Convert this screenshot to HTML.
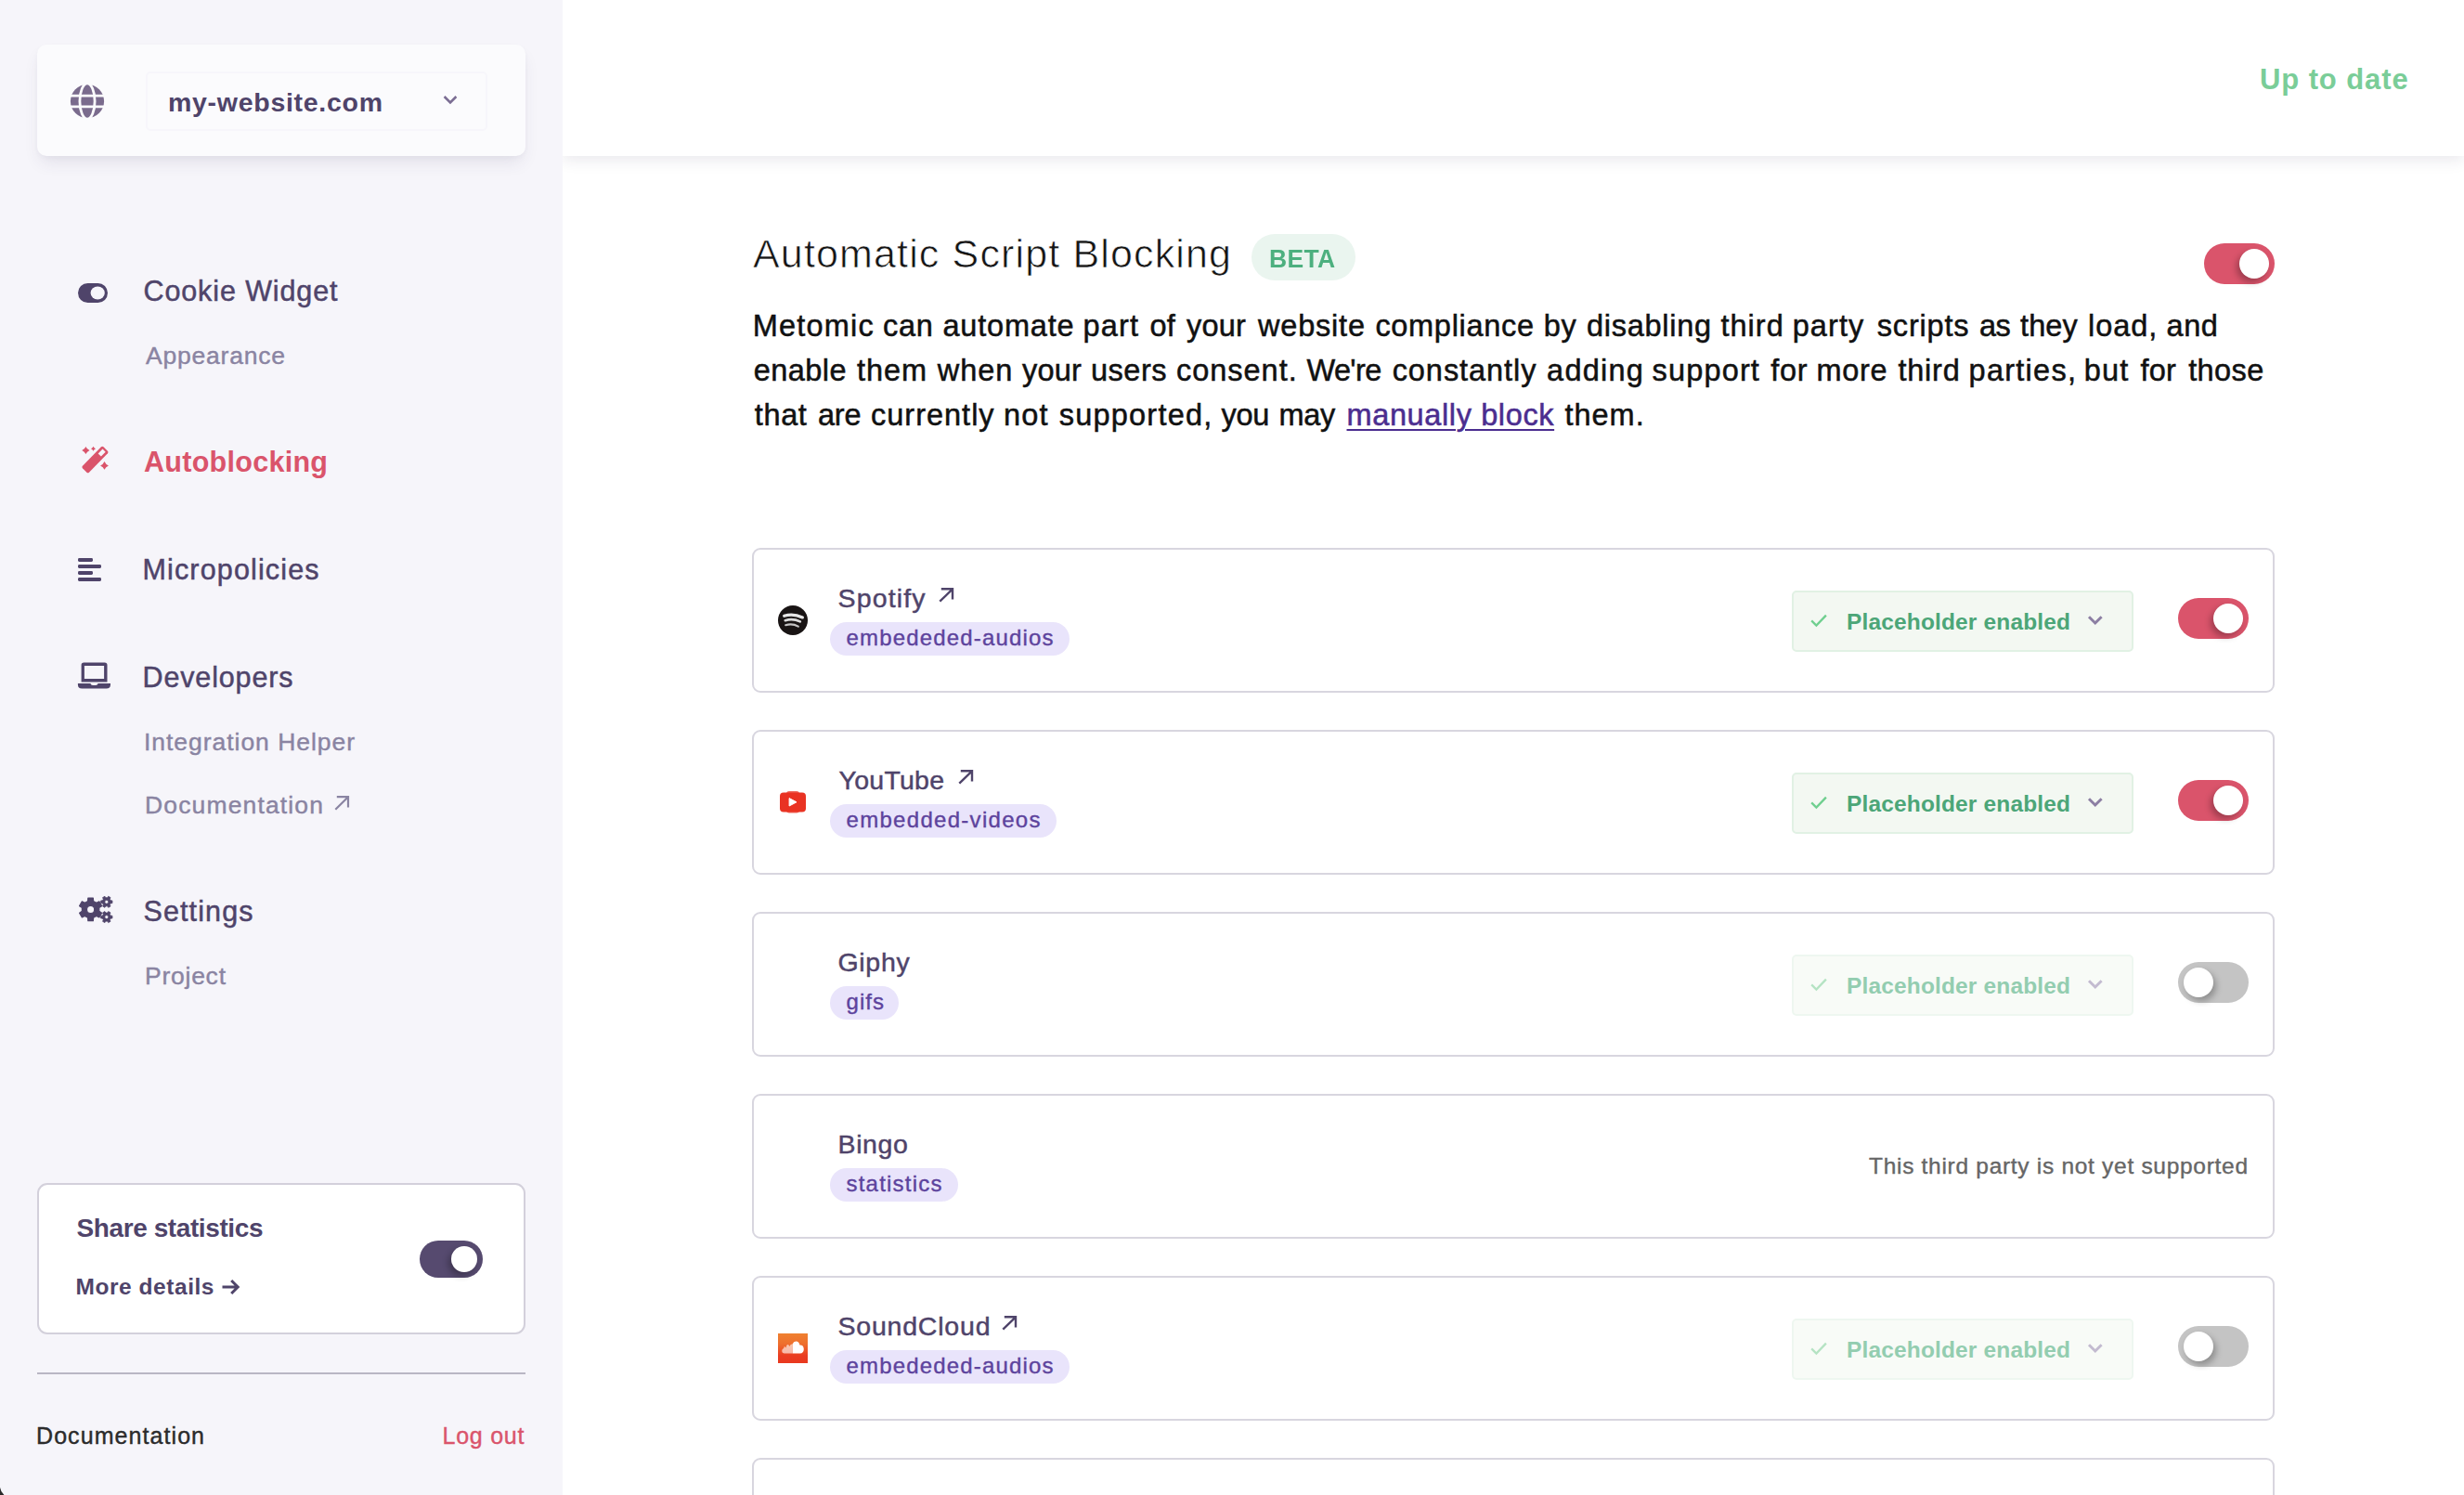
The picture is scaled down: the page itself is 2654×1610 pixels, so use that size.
<!DOCTYPE html>
<html lang="en"><head><meta charset="utf-8"><title>Automatic Script Blocking</title>
<style>
html,body{margin:0;padding:0;width:2654px;height:1610px;overflow:hidden;background:#fff}
#app{position:absolute;left:0;top:0;width:2654px;height:1610px;overflow:hidden;background:#fff;font-family:"Liberation Sans",sans-serif}
.t{position:absolute;white-space:nowrap;line-height:1em;display:block;text-decoration:none}
.ab{position:absolute;display:block;overflow:visible}
#sidebar{position:absolute;left:0;top:0;width:606px;height:1610px;background:#f6f5fa}
#header{position:absolute;left:606px;top:0;width:2048px;height:168px;background:#fff;box-shadow:0 5px 15px rgba(40,30,70,.095)}
#sitecard{position:absolute;left:40px;top:48px;width:526px;height:120px;border-radius:10px;background:#fbfbfd;box-shadow:0 10px 18px -4px rgba(60,50,100,.115),0 2px 5px rgba(60,50,100,.03)}
#sel{position:absolute;left:156.5px;top:76.5px;width:368px;height:64px;box-sizing:border-box;border:2px solid #f7f6fb;border-radius:5px;background:#fbfbfd}
#sharecard{position:absolute;left:40px;top:1274px;width:526px;height:163px;box-sizing:border-box;border:2px solid #d3d0db;border-radius:11px;background:#fff}
#divider{position:absolute;left:40px;top:1477.5px;width:526px;height:2px;background:#b9b6c4}
#corner{position:absolute;left:0;top:1601px;width:6px;height:9px}
.card{position:absolute;left:810px;width:1640px;box-sizing:border-box;border:2px solid #d8d6df;border-radius:9px;background:#fff}
.pill{position:absolute;height:36px;border-radius:18px;background:#e9e4fb}
.ph{position:absolute;left:1930px;width:368px;height:66px;box-sizing:border-box;border:2px solid #e1f1e4;border-radius:5px;background:#f3f8f2}
.tg{position:absolute}
.tg i{position:absolute;display:block;border-radius:50%;background:#fff}
#betapill{position:absolute;left:1348px;top:252px;width:112px;height:50px;border-radius:25px;background:#eaf5ef}
</style></head>
<body>
<div id="app">
<div id="header"></div>
<div id="sidebar"></div>
<div id="sitecard"></div><div id="sel"></div>
<svg class="ab" style="left:74.2px;top:88.6px;" width="40" height="40" viewBox="0 0 40 40"><circle cx="20" cy="20" r="18.1" fill="#7a6b8d"/><g fill="none" stroke="#fbfbfd" stroke-width="2.8"><path d="M0,14.2 H40 M0,25.9 H40"/><ellipse cx="20" cy="20" rx="8.1" ry="19.2"/></g></svg>
<svg class="ab" style="left:476px;top:101px" width="18" height="13" viewBox="0 0 18 13" fill="none" stroke="#7b6d93" stroke-width="2.6"><path d="M2.6,3 L9,9.4 L15.4,3"/></svg>
<svg class="ab" style="left:84px;top:305px;" width="32" height="21" viewBox="0 0 32 21"><rect x="0" y="0" width="32" height="21" rx="10.5" fill="#4f446a"/><ellipse cx="21.2" cy="10.5" rx="7.6" ry="7" fill="#f6f5fa"/></svg>
<svg class="ab" style="left:84px;top:476px;" width="40" height="40" viewBox="0 0 40 40"><g transform="translate(18.45,19.00) rotate(-45.63)"><rect x="-16.09" y="-4.9" width="32.18" height="9.8" rx="1.8" fill="#da546b"/><rect x="6.89" y="-2.2" width="6.9" height="4.4" fill="#f6f5fa"/></g><path fill="#da546b" d="M8.40,4.90Q9.63,7.77 12.50,9.00Q9.63,10.23 8.40,13.10Q7.17,10.23 4.30,9.00Q7.17,7.77 8.40,4.90ZM16.50,4.70Q17.25,6.45 19.00,7.20Q17.25,7.95 16.50,9.70Q15.75,7.95 14.00,7.20Q15.75,6.45 16.50,4.70ZM28.50,21.00Q29.82,24.08 32.90,25.40Q29.82,26.72 28.50,29.80Q27.18,26.72 24.10,25.40Q27.18,24.08 28.50,21.00Z"/></svg>
<svg class="ab" style="left:84px;top:601px;" width="26" height="26" viewBox="0 0 26 26"><rect x="0" y="0" width="16" height="4" rx="1.4" fill="#4f446a"/><rect x="0" y="7" width="25" height="4" rx="1.4" fill="#4f446a"/><rect x="0" y="14" width="16" height="4" rx="1.4" fill="#4f446a"/><rect x="0" y="21" width="25" height="4" rx="1.4" fill="#4f446a"/></svg>
<svg class="ab" style="left:83px;top:712px;" width="38" height="32" viewBox="0 0 38 32"><path fill="#4f446a" fill-rule="evenodd" d="M4.6,4.2 Q4.6,1.4 7.4,1.4 H29.7 Q32.5,1.4 32.5,4.2 V22.4 H4.6 Z M7.9,4.9 V19.1 H29.1 V4.9 Z"/><path fill="#4f446a" d="M0.9,24 H14.4 Q14.9,26 17,26 H20 Q22.1,26 22.6,24 H36 V25.2 Q36,29.5 31.6,29.5 H5.3 Q0.9,29.5 0.9,25.2 Z"/></svg>
<svg class="ab" style="left:84px;top:963px;" width="40" height="34" viewBox="0 0 40 34"><path fill="#4f446a" fill-rule="evenodd" stroke="#4f446a" stroke-width="1.2" stroke-linejoin="round" d="M10.60,7.49 L10.85,4.10 L16.35,4.10 L16.60,7.49 L19.82,9.35 L22.87,7.87 L25.62,12.63 L22.81,14.54 L22.81,18.26 L25.62,20.17 L22.87,24.93 L19.82,23.45 L16.60,25.31 L16.35,28.70 L10.85,28.70 L10.60,25.31 L7.38,23.45 L4.33,24.93 L1.58,20.17 L4.39,18.26 L4.39,14.54 L1.58,12.63 L4.33,7.87 L7.38,9.35Z M9.50,16.40 a4.1,4.1 0 1,0 8.2,0 a4.1,4.1 0 1,0 -8.2,0Z"/><path fill="#4f446a" fill-rule="evenodd" stroke="#4f446a" stroke-width="0.8" stroke-linejoin="round" d="M35.16,6.83 L36.95,6.93 L36.95,9.67 L35.16,9.77 L34.25,11.34 L35.06,12.94 L32.68,14.31 L31.71,12.81 L29.89,12.81 L28.92,14.31 L26.54,12.94 L27.35,11.34 L26.44,9.77 L24.65,9.67 L24.65,6.93 L26.44,6.83 L27.35,5.26 L26.54,3.66 L28.92,2.29 L29.89,3.79 L31.71,3.79 L32.68,2.29 L35.06,3.66 L34.25,5.26Z M28.80,8.30 a2.0,2.0 0 1,0 4.0,0 a2.0,2.0 0 1,0 -4.0,0Z M35.16,23.13 L36.95,23.23 L36.95,25.97 L35.16,26.07 L34.25,27.64 L35.06,29.24 L32.68,30.61 L31.71,29.11 L29.89,29.11 L28.92,30.61 L26.54,29.24 L27.35,27.64 L26.44,26.07 L24.65,25.97 L24.65,23.23 L26.44,23.13 L27.35,21.56 L26.54,19.96 L28.92,18.59 L29.89,20.09 L31.71,20.09 L32.68,18.59 L35.06,19.96 L34.25,21.56Z M28.80,24.60 a2.0,2.0 0 1,0 4.0,0 a2.0,2.0 0 1,0 -4.0,0Z"/></svg>
<svg class="ab" style="left:360px;top:856px" width="17" height="17" viewBox="-1 -1 17 17" fill="none" stroke="#8a84a2" stroke-width="2.2"><path d="M0.3,14.7 L14,1.3 M1.8,1.2 H14 V12.4"/></svg>
<div id="sharecard"></div>
<div class="tg" style="left:452px;top:1336px;width:68px;height:40px;border-radius:20.0px;background:#564a6f"><i style="left:34.0px;top:6.0px;width:28px;height:28px;box-shadow:-3px 4px 7px rgba(0,0,0,.28)"></i></div>
<svg class="ab" style="left:238px;top:1376px" width="22" height="20" viewBox="0 0 22 20" fill="none" stroke="#4f446a" stroke-width="3"><path d="M1.5,10 H18 M11.2,3 L18.2,10 L11.2,17"/></svg>
<div id="divider"></div>
<svg id="corner" viewBox="0 0 6 9"><path d="M0,0.8 Q0.6,5.4 4.4,9 L0,9Z" fill="#2a2a2a"/></svg>
<div id="betapill"></div>
<div class="tg" style="left:2374px;top:262px;width:76px;height:44px;border-radius:22.0px;background:#da546b"><i style="left:38.0px;top:6.0px;width:32px;height:32px;box-shadow:-3px 4px 7px rgba(0,0,0,.28)"></i></div>
<div class="card" style="top:590px;height:156px"></div>
<div class="pill" style="left:894px;top:670px;width:257.5px"></div>
<svg class="ab" style="left:1011px;top:632.2px" width="17" height="17" viewBox="-1 -1 17 17" fill="none" stroke="#4f446a" stroke-width="2.4"><path d="M0.3,14.7 L14,1.3 M1.8,1.2 H14 V12.4"/></svg>
<svg class="ab" style="left:838px;top:652px;" width="32" height="32" viewBox="0 0 32 32"><circle cx="16" cy="16" r="16" fill="#191414"/><g fill="none" stroke="#fff" stroke-linecap="round" style="filter:blur(.6px)"><path d="M6.6,11.3 Q16.5,8.2 26.4,13" stroke-width="3.1" opacity=".9"/><path d="M7.8,16.2 Q16,13.7 23.8,17.4" stroke-width="2.7" opacity=".85"/><path d="M8.2,21.2 Q15.5,19 21.8,22.6" stroke-width="2.2" opacity=".75"/></g></svg>
<div class="ph" style="top:636px;"></div>
<svg class="ab" style="left:1949px;top:660px" width="20" height="16" viewBox="0 0 20 16" fill="none" stroke="#6fcf8f" stroke-width="2.3"><path d="M2.2,8.4 L7.4,13.5 L17.9,2.6"/></svg>
<svg class="ab" style="left:2248px;top:662px" width="18" height="12" viewBox="0 0 18 12" fill="none" stroke="#8c7fa3" stroke-width="3"><path d="M2,2.3 L8.8,9 L15.6,2.3"/></svg>
<div class="tg" style="left:2346px;top:644px;width:76px;height:44px;border-radius:22.0px;background:#da546b"><i style="left:38.0px;top:6.0px;width:32px;height:32px;box-shadow:-3px 4px 7px rgba(0,0,0,.28)"></i></div>
<div class="card" style="top:786px;height:156px"></div>
<div class="pill" style="left:894px;top:866px;width:244.0px"></div>
<svg class="ab" style="left:1031.5px;top:828.2px" width="17" height="17" viewBox="-1 -1 17 17" fill="none" stroke="#4f446a" stroke-width="2.4"><path d="M0.3,14.7 L14,1.3 M1.8,1.2 H14 V12.4"/></svg>
<svg class="ab" style="left:840px;top:852.3px;" width="28" height="24" viewBox="0 0 28 24"><g style="filter:blur(.55px)"><rect x="0" y="1.4" width="28" height="21" rx="4" fill="#e93323"/><rect x="7" y="0" width="14" height="23.6" rx="3" fill="#e93323" opacity=".75"/><path d="M10.1,7.6 L18,11.8 L10.1,16 Z" fill="#fff" stroke="#fff" stroke-width="1" stroke-linejoin="round"/></g></svg>
<div class="ph" style="top:832px;"></div>
<svg class="ab" style="left:1949px;top:856px" width="20" height="16" viewBox="0 0 20 16" fill="none" stroke="#6fcf8f" stroke-width="2.3"><path d="M2.2,8.4 L7.4,13.5 L17.9,2.6"/></svg>
<svg class="ab" style="left:2248px;top:858px" width="18" height="12" viewBox="0 0 18 12" fill="none" stroke="#8c7fa3" stroke-width="3"><path d="M2,2.3 L8.8,9 L15.6,2.3"/></svg>
<div class="tg" style="left:2346px;top:840px;width:76px;height:44px;border-radius:22.0px;background:#da546b"><i style="left:38.0px;top:6.0px;width:32px;height:32px;box-shadow:-3px 4px 7px rgba(0,0,0,.28)"></i></div>
<div class="card" style="top:982px;height:156px"></div>
<div class="pill" style="left:894px;top:1062px;width:73.6px"></div>
<div class="ph" style="top:1028px;opacity:.55;"></div>
<svg class="ab" style="left:1949px;top:1052px" width="20" height="16" viewBox="0 0 20 16" fill="none" stroke="#b5e3c3" stroke-width="2.3"><path d="M2.2,8.4 L7.4,13.5 L17.9,2.6"/></svg>
<svg class="ab" style="left:2248px;top:1054px" width="18" height="12" viewBox="0 0 18 12" fill="none" stroke="#c3bbd0" stroke-width="3"><path d="M2,2.3 L8.8,9 L15.6,2.3"/></svg>
<div class="tg" style="left:2346px;top:1036px;width:76px;height:44px;border-radius:22.0px;background:#c4c4c4"><i style="left:6.0px;top:6.0px;width:32px;height:32px;box-shadow:3px 4px 7px rgba(0,0,0,.28)"></i></div>
<div class="card" style="top:1178px;height:156px"></div>
<div class="pill" style="left:894px;top:1258px;width:138.0px"></div>
<div class="card" style="top:1374px;height:156px"></div>
<div class="pill" style="left:894px;top:1454px;width:257.5px"></div>
<svg class="ab" style="left:1078.5px;top:1416.2px" width="17" height="17" viewBox="-1 -1 17 17" fill="none" stroke="#4f446a" stroke-width="2.4"><path d="M0.3,14.7 L14,1.3 M1.8,1.2 H14 V12.4"/></svg>
<svg class="ab" style="left:838px;top:1436px;" width="32" height="32" viewBox="0 0 32 32"><defs><linearGradient id="scg" x1="0" y1="0" x2="0" y2="1"><stop offset="0" stop-color="#ef8030"/><stop offset=".35" stop-color="#ee6f2d"/><stop offset=".75" stop-color="#ea3d22"/><stop offset="1" stop-color="#e9391f"/></linearGradient></defs><rect width="32" height="32" fill="url(#scg)"/><g style="filter:blur(.7px)"><path fill="#fff" d="M15.8,21.6 V11.2 Q16.6,8.6 19.4,8.6 Q22.6,8.8 23.4,12.6 Q27.6,12.4 27.8,17 Q27.6,21.4 23.8,21.6 Z"/><path fill="#fff" opacity=".62" d="M4.2,19 Q4.2,16.4 6.2,16 Q6.6,13.4 7.6,14.4 L8.6,15.4 Q9.2,12 10.6,12 Q11.8,12.2 12.2,14 Q13.4,11.4 15.8,11.2 V21.6 H6.6 Q4.2,21.4 4.2,19 Z"/></g></svg>
<div class="ph" style="top:1420px;opacity:.55;"></div>
<svg class="ab" style="left:1949px;top:1444px" width="20" height="16" viewBox="0 0 20 16" fill="none" stroke="#b5e3c3" stroke-width="2.3"><path d="M2.2,8.4 L7.4,13.5 L17.9,2.6"/></svg>
<svg class="ab" style="left:2248px;top:1446px" width="18" height="12" viewBox="0 0 18 12" fill="none" stroke="#c3bbd0" stroke-width="3"><path d="M2,2.3 L8.8,9 L15.6,2.3"/></svg>
<div class="tg" style="left:2346px;top:1428px;width:76px;height:44px;border-radius:22.0px;background:#c4c4c4"><i style="left:6.0px;top:6.0px;width:32px;height:32px;box-shadow:3px 4px 7px rgba(0,0,0,.28)"></i></div>
<div class="card" style="top:1570px;height:156px"></div>
<span class="t" id="site" style="left:181.00px;top:95.87px;font-size:28.5px;font-weight:700;color:#4f446a;letter-spacing:0.712px;">my-website.com</span>
<span class="t" id="nav1" style="left:154.50px;top:298.18px;font-size:30.5px;font-weight:400;color:#4f446a;letter-spacing:0.888px;-webkit-text-stroke:0.49px #4f446a;">Cookie Widget</span>
<span class="t" id="sub1" style="left:157.00px;top:369.57px;font-size:26.5px;font-weight:400;color:#8a84a2;letter-spacing:0.786px;-webkit-text-stroke:0.42px #8a84a2;">Appearance</span>
<span class="t" id="nav2" style="left:155.00px;top:482.18px;font-size:30.5px;font-weight:700;color:#da546b;letter-spacing:0.287px;">Autoblocking</span>
<span class="t" id="nav3" style="left:153.50px;top:598.18px;font-size:30.5px;font-weight:400;color:#4f446a;letter-spacing:1.144px;-webkit-text-stroke:0.49px #4f446a;">Micropolicies</span>
<span class="t" id="nav4" style="left:153.50px;top:714.18px;font-size:30.5px;font-weight:400;color:#4f446a;letter-spacing:0.857px;-webkit-text-stroke:0.49px #4f446a;">Developers</span>
<span class="t" id="sub2" style="left:155.00px;top:785.57px;font-size:26.5px;font-weight:400;color:#8a84a2;letter-spacing:0.962px;-webkit-text-stroke:0.42px #8a84a2;">Integration Helper</span>
<span class="t" id="sub3" style="left:156.00px;top:853.57px;font-size:26.5px;font-weight:400;color:#8a84a2;letter-spacing:1.146px;-webkit-text-stroke:0.42px #8a84a2;">Documentation</span>
<span class="t" id="nav5" style="left:154.50px;top:966.18px;font-size:30.5px;font-weight:400;color:#4f446a;letter-spacing:1.112px;-webkit-text-stroke:0.49px #4f446a;">Settings</span>
<span class="t" id="sub4" style="left:156.00px;top:1037.57px;font-size:26.5px;font-weight:400;color:#8a84a2;letter-spacing:0.752px;-webkit-text-stroke:0.42px #8a84a2;">Project</span>
<span class="t" id="share" style="left:82.50px;top:1309.10px;font-size:28px;font-weight:700;color:#4f446a;letter-spacing:-0.402px;">Share statistics</span>
<span class="t" id="more" style="left:81.50px;top:1374.26px;font-size:24.5px;font-weight:700;color:#4f446a;letter-spacing:0.548px;">More details</span>
<span class="t" id="fdoc" style="left:39.00px;top:1533.64px;font-size:25px;font-weight:400;color:#2b2b2b;letter-spacing:1.071px;-webkit-text-stroke:0.40px #2b2b2b;">Documentation</span>
<span class="t" id="logout" style="left:476.50px;top:1533.64px;font-size:25px;font-weight:400;color:#da546b;letter-spacing:0.762px;-webkit-text-stroke:0.40px #da546b;">Log out</span>
<span class="t" id="uptodate" style="left:2434.00px;top:70.16px;font-size:31px;font-weight:700;color:#7acd98;letter-spacing:0.898px;">Up to date</span>
<span class="t" id="title" style="left:811.00px;top:252.10px;font-size:43px;font-weight:400;color:#151515;letter-spacing:1.144px;-webkit-text-stroke:0.7px #fff;">Automatic Script Blocking</span>
<span class="t" id="beta" style="left:1367.40px;top:264.37px;font-size:28.5px;font-weight:700;color:#4db07f;letter-spacing:0.334px;transform:scaleX(.93);transform-origin:0 0;">BETA</span>
<p style="margin:0"><span class="t" id="w0_0" style="left:810.70px;top:335.29px;font-size:32.5px;font-weight:400;color:#111;letter-spacing:1.199px;-webkit-text-stroke:0.52px #111;">Metomic</span>
<span class="t" id="w0_1" style="left:951.10px;top:335.29px;font-size:32.5px;font-weight:400;color:#111;letter-spacing:0.700px;-webkit-text-stroke:0.52px #111;">can</span>
<span class="t" id="w0_2" style="left:1015.50px;top:335.29px;font-size:32.5px;font-weight:400;color:#111;letter-spacing:0.798px;-webkit-text-stroke:0.52px #111;">automate</span>
<span class="t" id="w0_3" style="left:1166.50px;top:335.29px;font-size:32.5px;font-weight:400;color:#111;letter-spacing:1.201px;-webkit-text-stroke:0.52px #111;">part</span>
<span class="t" id="w0_4" style="left:1238.40px;top:335.29px;font-size:32.5px;font-weight:400;color:#111;letter-spacing:0.200px;-webkit-text-stroke:0.52px #111;">of</span>
<span class="t" id="w0_5" style="left:1277.90px;top:335.29px;font-size:32.5px;font-weight:400;color:#111;letter-spacing:0.265px;-webkit-text-stroke:0.52px #111;">your</span>
<span class="t" id="w0_6" style="left:1355.00px;top:335.29px;font-size:32.5px;font-weight:400;color:#111;letter-spacing:0.797px;-webkit-text-stroke:0.52px #111;">website</span>
<span class="t" id="w0_7" style="left:1481.40px;top:335.29px;font-size:32.5px;font-weight:400;color:#111;letter-spacing:0.692px;-webkit-text-stroke:0.52px #111;">compliance</span>
<span class="t" id="w0_8" style="left:1662.80px;top:335.29px;font-size:32.5px;font-weight:400;color:#111;letter-spacing:0.600px;-webkit-text-stroke:0.52px #111;">by</span>
<span class="t" id="w0_9" style="left:1708.90px;top:335.29px;font-size:32.5px;font-weight:400;color:#111;letter-spacing:0.750px;-webkit-text-stroke:0.52px #111;">disabling</span>
<span class="t" id="w0_10" style="left:1853.50px;top:335.29px;font-size:32.5px;font-weight:400;color:#111;letter-spacing:1.000px;-webkit-text-stroke:0.52px #111;">third</span>
<span class="t" id="w0_11" style="left:1930.70px;top:335.29px;font-size:32.5px;font-weight:400;color:#111;letter-spacing:1.100px;-webkit-text-stroke:0.52px #111;">party</span>
<span class="t" id="w0_12" style="left:2021.80px;top:335.29px;font-size:32.5px;font-weight:400;color:#111;letter-spacing:0.801px;-webkit-text-stroke:0.52px #111;">scripts</span>
<span class="t" id="w0_13" style="left:2132.00px;top:335.29px;font-size:32.5px;font-weight:400;color:#111;letter-spacing:-0.600px;-webkit-text-stroke:0.52px #111;">as</span>
<span class="t" id="w0_14" style="left:2176.10px;top:335.29px;font-size:32.5px;font-weight:400;color:#111;letter-spacing:0.065px;-webkit-text-stroke:0.52px #111;">they</span>
<span class="t" id="w0_15" style="left:2249.10px;top:335.29px;font-size:32.5px;font-weight:400;color:#111;letter-spacing:0.950px;-webkit-text-stroke:0.52px #111;">load,</span>
<span class="t" id="w0_16" style="left:2333.60px;top:335.29px;font-size:32.5px;font-weight:400;color:#111;letter-spacing:0.500px;-webkit-text-stroke:0.52px #111;">and</span>
<span class="t" id="w1_0" style="left:811.70px;top:383.29px;font-size:32.5px;font-weight:400;color:#111;letter-spacing:0.440px;-webkit-text-stroke:0.52px #111;">enable</span>
<span class="t" id="w1_1" style="left:923.10px;top:383.29px;font-size:32.5px;font-weight:400;color:#111;letter-spacing:0.868px;-webkit-text-stroke:0.52px #111;">them</span>
<span class="t" id="w1_2" style="left:1009.80px;top:383.29px;font-size:32.5px;font-weight:400;color:#111;letter-spacing:0.931px;-webkit-text-stroke:0.52px #111;">when</span>
<span class="t" id="w1_3" style="left:1101.00px;top:383.29px;font-size:32.5px;font-weight:400;color:#111;letter-spacing:0.199px;-webkit-text-stroke:0.52px #111;">your</span>
<span class="t" id="w1_4" style="left:1175.00px;top:383.29px;font-size:32.5px;font-weight:400;color:#111;letter-spacing:0.500px;-webkit-text-stroke:0.52px #111;">users</span>
<span class="t" id="w1_5" style="left:1267.00px;top:383.29px;font-size:32.5px;font-weight:400;color:#111;letter-spacing:0.974px;-webkit-text-stroke:0.52px #111;">consent.</span>
<span class="t" id="w1_6" style="left:1407.40px;top:383.29px;font-size:32.5px;font-weight:400;color:#111;letter-spacing:-0.600px;-webkit-text-stroke:0.52px #111;">We're</span>
<span class="t" id="w1_7" style="left:1499.70px;top:383.29px;font-size:32.5px;font-weight:400;color:#111;letter-spacing:0.931px;-webkit-text-stroke:0.52px #111;">constantly</span>
<span class="t" id="w1_8" style="left:1666.10px;top:383.29px;font-size:32.5px;font-weight:400;color:#111;letter-spacing:1.240px;-webkit-text-stroke:0.52px #111;">adding</span>
<span class="t" id="w1_9" style="left:1779.50px;top:383.29px;font-size:32.5px;font-weight:400;color:#111;letter-spacing:1.167px;-webkit-text-stroke:0.52px #111;">support</span>
<span class="t" id="w1_10" style="left:1907.20px;top:383.29px;font-size:32.5px;font-weight:400;color:#111;letter-spacing:0.700px;-webkit-text-stroke:0.52px #111;">for</span>
<span class="t" id="w1_11" style="left:1956.50px;top:383.29px;font-size:32.5px;font-weight:400;color:#111;letter-spacing:0.667px;-webkit-text-stroke:0.52px #111;">more</span>
<span class="t" id="w1_12" style="left:2044.40px;top:383.29px;font-size:32.5px;font-weight:400;color:#111;letter-spacing:0.800px;-webkit-text-stroke:0.52px #111;">third</span>
<span class="t" id="w1_13" style="left:2120.60px;top:383.29px;font-size:32.5px;font-weight:400;color:#111;letter-spacing:1.255px;-webkit-text-stroke:0.52px #111;">parties,</span>
<span class="t" id="w1_14" style="left:2244.80px;top:383.29px;font-size:32.5px;font-weight:400;color:#111;letter-spacing:1.200px;-webkit-text-stroke:0.52px #111;">but</span>
<span class="t" id="w1_15" style="left:2305.60px;top:383.29px;font-size:32.5px;font-weight:400;color:#111;letter-spacing:0.200px;-webkit-text-stroke:0.52px #111;">for</span>
<span class="t" id="w1_16" style="left:2357.20px;top:383.29px;font-size:32.5px;font-weight:400;color:#111;letter-spacing:0.400px;-webkit-text-stroke:0.52px #111;">those</span>
<span class="t" id="w2_0" style="left:812.70px;top:431.29px;font-size:32.5px;font-weight:400;color:#111;letter-spacing:0.667px;-webkit-text-stroke:0.52px #111;">that</span>
<span class="t" id="w2_1" style="left:881.00px;top:431.29px;font-size:32.5px;font-weight:400;color:#111;letter-spacing:-0.200px;-webkit-text-stroke:0.52px #111;">are</span>
<span class="t" id="w2_2" style="left:938.00px;top:431.29px;font-size:32.5px;font-weight:400;color:#111;letter-spacing:1.000px;-webkit-text-stroke:0.52px #111;">currently</span>
<span class="t" id="w2_3" style="left:1080.90px;top:431.29px;font-size:32.5px;font-weight:400;color:#111;letter-spacing:1.200px;-webkit-text-stroke:0.52px #111;">not</span>
<span class="t" id="w2_4" style="left:1140.70px;top:431.29px;font-size:32.5px;font-weight:400;color:#111;letter-spacing:1.222px;-webkit-text-stroke:0.52px #111;">supported,</span>
<span class="t" id="w2_5" style="left:1315.40px;top:431.29px;font-size:32.5px;font-weight:400;color:#111;letter-spacing:-0.200px;-webkit-text-stroke:0.52px #111;">you</span>
<span class="t" id="w2_6" style="left:1377.50px;top:431.29px;font-size:32.5px;font-weight:400;color:#111;letter-spacing:-0.300px;-webkit-text-stroke:0.52px #111;">may</span>
<a class="t" id="p3b" style="left:1450.50px;top:431.29px;font-size:32.5px;font-weight:400;color:#4b2d8f;letter-spacing:0.618px;text-decoration:underline;text-decoration-thickness:2px;text-underline-offset:4px;-webkit-text-stroke:0.52px #4b2d8f;">manually block</a>
<span class="t" id="w2_8" style="left:1685.40px;top:431.29px;font-size:32.5px;font-weight:400;color:#111;letter-spacing:1.000px;-webkit-text-stroke:0.52px #111;">them.</span></p>
<span class="t" id="c0n" style="left:902.50px;top:629.87px;font-size:28.5px;font-weight:400;color:#4f446a;letter-spacing:1.143px;-webkit-text-stroke:0.46px #4f446a;">Spotify</span>
<span class="t" id="c0t" style="left:911.50px;top:675.38px;font-size:24px;font-weight:400;color:#5d439d;letter-spacing:1.166px;-webkit-text-stroke:0.38px #5d439d;">embededed-audios</span>
<span class="t" id="c0p" style="left:1989.00px;top:657.96px;font-size:24.5px;font-weight:700;color:#4ca678;letter-spacing:0.151px;">Placeholder enabled</span>
<span class="t" id="c1n" style="left:903.50px;top:825.87px;font-size:28.5px;font-weight:400;color:#4f446a;letter-spacing:0.265px;-webkit-text-stroke:0.46px #4f446a;">YouTube</span>
<span class="t" id="c1t" style="left:911.50px;top:871.38px;font-size:24px;font-weight:400;color:#5d439d;letter-spacing:1.300px;-webkit-text-stroke:0.38px #5d439d;">embedded-videos</span>
<span class="t" id="c1p" style="left:1989.00px;top:853.96px;font-size:24.5px;font-weight:700;color:#4ca678;letter-spacing:0.151px;">Placeholder enabled</span>
<span class="t" id="c2n" style="left:902.50px;top:1021.87px;font-size:28.5px;font-weight:400;color:#4f446a;letter-spacing:0.687px;-webkit-text-stroke:0.46px #4f446a;">Giphy</span>
<span class="t" id="c2t" style="left:911.50px;top:1067.38px;font-size:24px;font-weight:400;color:#5d439d;letter-spacing:1.082px;-webkit-text-stroke:0.38px #5d439d;">gifs</span>
<span class="t" id="c2p" style="left:1989.00px;top:1049.96px;font-size:24.5px;font-weight:700;color:#93cdb0;letter-spacing:0.151px;">Placeholder enabled</span>
<span class="t" id="c3n" style="left:902.50px;top:1217.87px;font-size:28.5px;font-weight:400;color:#4f446a;letter-spacing:0.623px;-webkit-text-stroke:0.46px #4f446a;">Bingo</span>
<span class="t" id="c3t" style="left:911.50px;top:1263.38px;font-size:24px;font-weight:400;color:#5d439d;letter-spacing:1.220px;-webkit-text-stroke:0.38px #5d439d;">statistics</span>
<span class="t" id="c3x" style="left:2013.00px;top:1244.26px;font-size:24.5px;font-weight:400;color:#666;letter-spacing:0.704px;-webkit-text-stroke:0.39px #666;">This third party is not yet supported</span>
<span class="t" id="c4n" style="left:902.50px;top:1413.87px;font-size:28.5px;font-weight:400;color:#4f446a;letter-spacing:0.791px;-webkit-text-stroke:0.46px #4f446a;">SoundCloud</span>
<span class="t" id="c4t" style="left:911.50px;top:1459.38px;font-size:24px;font-weight:400;color:#5d439d;letter-spacing:1.166px;-webkit-text-stroke:0.38px #5d439d;">embededed-audios</span>
<span class="t" id="c4p" style="left:1989.00px;top:1441.96px;font-size:24.5px;font-weight:700;color:#93cdb0;letter-spacing:0.151px;">Placeholder enabled</span>
</div>
</body></html>
